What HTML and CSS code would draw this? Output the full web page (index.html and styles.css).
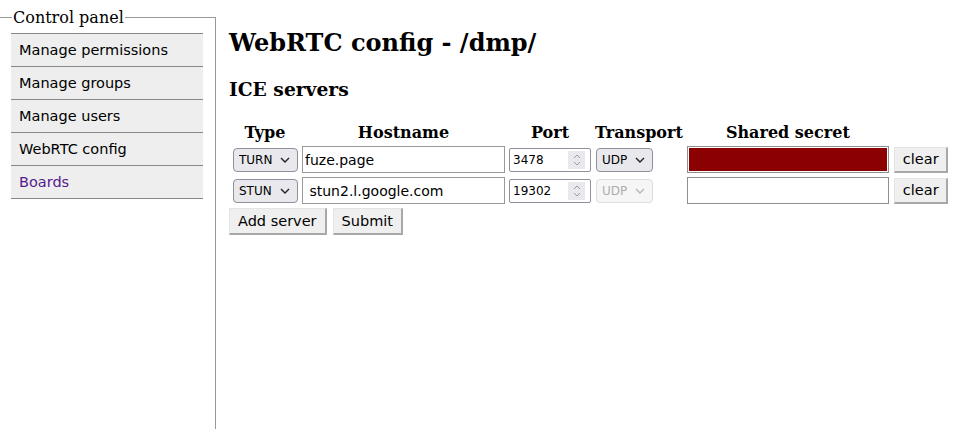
FILE: index.html
```html
<!DOCTYPE html>
<html lang="en">
<head>
    <meta charset="UTF-8">
    <title>WebRTC config - /dmp/</title>
    <link rel="stylesheet" href="styles.css">
</head>
<body>
    <fieldset class="panel">
        <legend>Control panel</legend>
        <ul class="menu">
            <li><span>Manage permissions</span></li>
            <li><span>Manage groups</span></li>
            <li><span>Manage users</span></li>
            <li><span>WebRTC config</span></li>
            <li><a href="#">Boards</a></li>
        </ul>
    </fieldset>
    <main class="content">
        <h1>WebRTC config - /dmp/</h1>
        <h2>ICE servers</h2>
        <table class="servers">
            <tr>
                <th>Type</th>
                <th>Hostname</th>
                <th>Port</th>
                <th>Transport</th>
                <th>Shared secret</th>
                <th></th>
            </tr>
            <tr>
                <td><select class="sel sel-type"><option>TURN</option><option>STUN</option></select></td>
                <td><input class="host" type="text" value="fuze.page"></td>
                <td>
                    <span class="port">
                        <input type="text" value="3478">
                        <span class="spin"><svg width="10" height="14" viewBox="0 0 10 14"><path d="M2 5 L5 2 L8 5 M2 9 L5 12 L8 9" fill="none" stroke="#9a9aa2" stroke-width="1"/></svg></span>
                    </span>
                </td>
                <td><select class="sel sel-proto"><option>UDP</option><option>TCP</option></select></td>
                <td><input class="secret filled" type="password" value=""></td>
                <td><button class="btn">clear</button></td>
            </tr>
            <tr>
                <td><select class="sel sel-type"><option>STUN</option><option>TURN</option></select></td>
                <td><input class="host" type="text" value=" stun2.l.google.com"></td>
                <td>
                    <span class="port">
                        <input type="text" value="19302">
                        <span class="spin"><svg width="10" height="14" viewBox="0 0 10 14"><path d="M2 5 L5 2 L8 5 M2 9 L5 12 L8 9" fill="none" stroke="#9a9aa2" stroke-width="1"/></svg></span>
                    </span>
                </td>
                <td><select class="sel sel-proto" disabled><option>UDP</option></select></td>
                <td><input class="secret" type="password" value=""></td>
                <td><button class="btn">clear</button></td>
            </tr>
        </table>
        <div class="actions">
            <button class="btn">Add server</button>
            <button class="btn">Submit</button>
        </div>
    </main>
</body>
</html>
```

FILE: styles.css
```css
* {
    box-sizing: border-box;
}

body {
    margin: 8px 0 0 0;
    display: flex;
    align-items: flex-start;
    font-family: "DejaVu Serif", serif;
    color: #000;
    background: #fff;
}

/* Side panel */

.panel {
    width: 216px;
    min-height: 440px;
    margin: 0;
    padding: 6px 12px 0 11px;
    border: 1px solid #999;
    border-left: none;
    border-bottom: none;
    flex-shrink: 0;
}

.panel legend {
    font-size: 16px;
    padding: 0 1px;
    margin-left: 1px;
    line-height: 19px;
}

.menu {
    list-style: none;
    margin: 0;
    padding: 0;
    border-top: 1px solid #888;
}

.menu li {
    height: 33px;
    border-bottom: 1px solid #888;
    background: #eee;
    padding-left: 8px;
    display: flex;
    align-items: center;
    font-family: "DejaVu Sans", sans-serif;
    font-size: 14.5px;
}

.menu a {
    color: #551a8b;
    text-decoration: none;
}

/* Main */

.content {
    margin-left: 13px;
}

.content h1 {
    font-size: 24px;
    margin: 21px 0 21px;
    line-height: 28px;
}

.content h2 {
    font-size: 18.7px;
    margin: 0 0 20px;
    line-height: 22px;
}

.servers {
    border-spacing: 2px;
    margin-left: 0;
}

.servers th {
    font-size: 16px;
    padding: 1px;
    line-height: 19px;
}

.servers td {
    padding: 1px;
    vertical-align: middle;
}

.sel {
    appearance: none;
    -webkit-appearance: none;
    font-family: "DejaVu Sans", sans-serif;
    font-size: 12px;
    color: #000;
    height: 24px;
    border: 1px solid #8f8f9d;
    border-radius: 4px;
    background-color: #e9e9ed;
    background-image: url("data:image/svg+xml;utf8,<svg xmlns='http://www.w3.org/2000/svg' width='10' height='6' viewBox='0 0 10 6'><path d='M1 1 L5 5 L9 1' fill='none' stroke='%23222' stroke-width='1.4'/></svg>");
    background-repeat: no-repeat;
    background-position: right 7px center;
    padding: 0 20px 0 5px;
    margin: 0 0 0 1px;
    display: block;
}

.sel-type {
    width: 65px;
}

.sel-proto {
    width: 57px;
}

.sel:disabled {
    color: #8a8a8a;
    border-color: #cfcfd6;
    background-color: #f3f3f5;
    background-image: url("data:image/svg+xml;utf8,<svg xmlns='http://www.w3.org/2000/svg' width='10' height='6' viewBox='0 0 10 6'><path d='M1 1 L5 5 L9 1' fill='none' stroke='%23999' stroke-width='1.4'/></svg>");
}

.host {
    width: 203px;
    height: 27px;
    font-family: "DejaVu Sans", sans-serif;
    font-size: 14px;
    border: 1px solid #999;
    padding: 0 2px;
    display: block;
}

.port {
    display: flex;
    align-items: center;
    width: 82px;
    height: 24px;
    border: 1px solid #8f8f9d;
    border-radius: 2px;
    padding: 0 3px 0 0;
}

.port input {
    border: none;
    outline: none;
    width: 58px;
    font-family: "DejaVu Sans", sans-serif;
    font-size: 12px;
    padding: 0 0 0 3px;
    background: transparent;
}

.spin {
    width: 17px;
    height: 18px;
    background: #e9e9ed;
    display: flex;
    align-items: center;
    justify-content: center;
}

.secret {
    width: 202px;
    height: 27px;
    border: 1px solid #8f8f8f;
    margin-left: 0;
    display: block;
}

.secret.filled {
    background: #8b0000;
    box-shadow: inset 0 0 0 1px #fff;
}

.btn {
    font-family: "DejaVu Sans", sans-serif;
    font-size: 14.5px;
    color: #000;
    background: #efefef;
    border-style: solid;
    border-width: 1px 2px 2px 1px;
    border-color: #e4e4e4 #a8a8a8 #a8a8a8 #e4e4e4;
    height: 27px;
    padding: 0 8px;
    display: block;
}

.servers .btn {
    height: 26px;
    width: 54px;
    margin-left: 1px;
}

.actions {
    display: flex;
    gap: 6px;
    margin-top: 1px;
}
```
